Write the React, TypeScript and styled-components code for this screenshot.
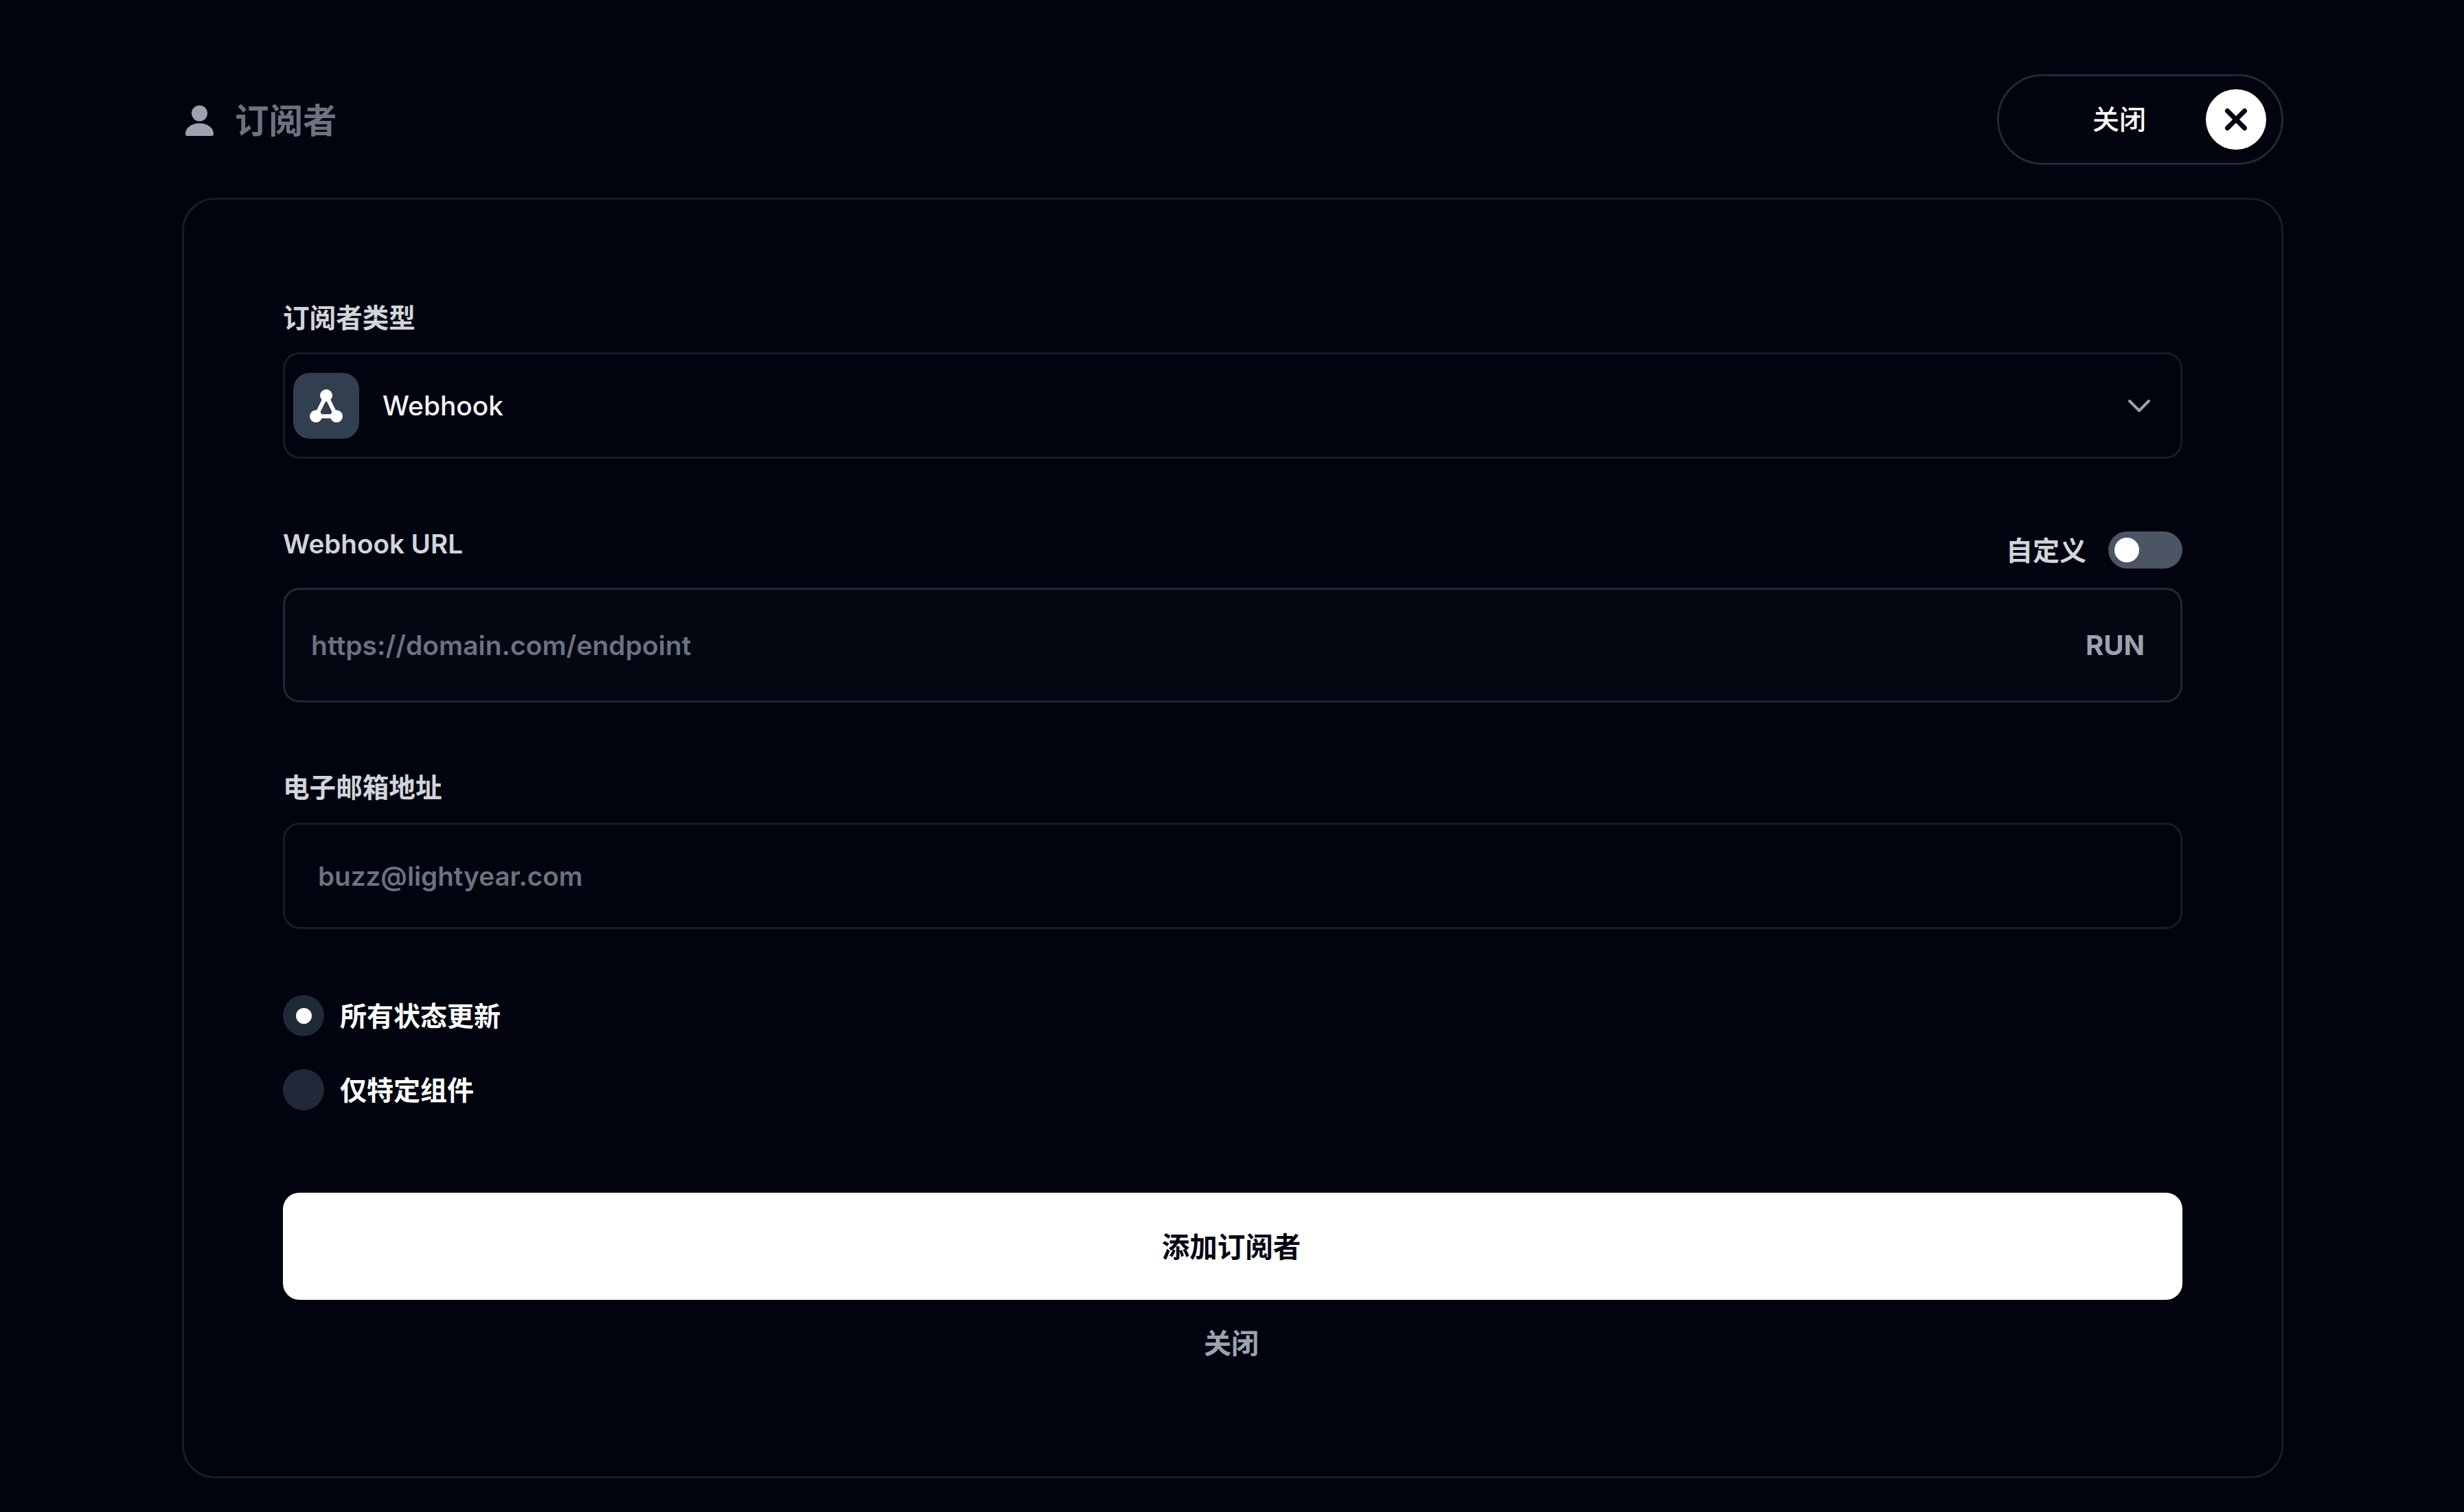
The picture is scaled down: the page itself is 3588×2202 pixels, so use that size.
import * as React from 'react';
import styled, { createGlobalStyle } from 'styled-components';

const GlobalStyle = createGlobalStyle`
    html, body {
        margin: 0;
        padding: 0;
        background: #01040f;
    }

    * {
        box-sizing: border-box;
    }

    body {
        font-family: Inter, "Noto Sans CJK SC", sans-serif;
        -webkit-font-smoothing: antialiased;
    }
`;

const PageStyled = styled.div`
    width: 3588px;
    height: 2202px;
    padding: 108px 263px 0 265px;
    overflow: hidden;
    background: #01040f;
`;

const HeaderStyled = styled.header`
    display: flex;
    justify-content: space-between;
    align-items: center;
    height: 132px;
    margin-bottom: 48px;
`;

const TitleStyled = styled.h1`
    display: flex;
    align-items: center;
    gap: 28px;
    margin: 0 0 0 1px;
    padding-top: 3px;
    font-size: 49.5px;
    line-height: 64px;
    font-weight: 600;
    color: #6b7280;
`;

const ClosePillStyled = styled.button`
    display: flex;
    align-items: center;
    gap: 87px;
    height: 132px;
    width: 417px;
    padding: 0 0 0 136px;
    border: 3px solid #1f2937;
    border-radius: 66px;
    background: transparent;
    color: #ffffff;
    font: 500 39px/56px Inter, "Noto Sans CJK SC", sans-serif;
`;

const CloseCircleStyled = styled.span`
    display: flex;
    align-items: center;
    justify-content: center;
    flex: none;
    width: 88px;
    height: 88px;
    border-radius: 50%;
    background: #ffffff;
`;

const CardStyled = styled.main`
    height: 1865px;
    padding: 144px 144px 0;
    border: 3px solid #161d2b;
    border-radius: 48px;
    background: #01040f;
`;

const LabelStyled = styled.div<{ $spaced?: boolean }>`
    margin-top: ${props => (props.$spaced ? '96px' : '0')};
    font-size: 38.6px;
    line-height: 56px;
    font-weight: 600;
    color: #d1d5db;
`;

const SelectStyled = styled.div`
    display: flex;
    align-items: center;
    height: 155px;
    margin-top: 22px;
    padding: 0 42px 0 12px;
    border: 3px solid #151c2a;
    border-radius: 24px;
`;

const SelectIconStyled = styled.span`
    display: flex;
    flex: none;
    width: 96px;
    height: 96px;
    border-radius: 24px;
    background: #323f50;
`;

const SelectTextStyled = styled.span`
    flex: 1;
    margin-left: 34px;
    font-size: 38.9px;
    font-weight: 500;
    color: #f3f4f6;
`;

const LabelRowStyled = styled.div`
    display: flex;
    justify-content: space-between;
    align-items: flex-start;
    height: 64px;
    margin-top: 96px;
`;

const CustomToggleStyled = styled.div`
    display: flex;
    align-items: center;
    gap: 32px;
    height: 54px;
    margin-top: 10px;
    font-size: 39px;
    font-weight: 600;
    color: #d1d5db;
`;

const CustomLabelStyled = styled.span`
    margin-bottom: 4px;
`;

const ToggleTrackStyled = styled.span`
    display: flex;
    align-items: center;
    width: 108px;
    height: 54px;
    padding: 0 9px;
    border-radius: 27px;
    background: #4b5563;
`;

const ToggleKnobStyled = styled.span`
    width: 36px;
    height: 36px;
    border-radius: 50%;
    background: #ffffff;
`;

const UrlBoxStyled = styled.div`
    display: flex;
    align-items: center;
    height: 167px;
    margin-top: 28px;
    padding: 0 52px 0 38px;
    border: 3px solid #1f2937;
    border-radius: 24px;
    background: #030712;
`;

const EmailBoxStyled = styled.div`
    display: flex;
    align-items: center;
    height: 155px;
    margin-top: 23px;
    padding: 0 48px;
    border: 3px solid #151c2a;
    border-radius: 24px;
`;

const InputStyled = styled.input<{ $size: number }>`
    flex: 1;
    min-width: 0;
    padding: 0;
    border: none;
    outline: none;
    background: transparent;
    font: 600 ${props => props.$size}px/56px Inter, "Noto Sans CJK SC", sans-serif;
    color: #f3f4f6;

    &::placeholder {
        color: #6b7280;
        opacity: 1;
    }
`;

const RunStyled = styled.span`
    font-size: 40px;
    font-weight: 700;
    color: #9ca3af;
`;

const RadioGroupStyled = styled.div`
    display: flex;
    flex-direction: column;
    gap: 48px;
    margin-top: 96px;
`;

const RadioRowStyled = styled.label`
    display: flex;
    align-items: center;
    gap: 23px;
    height: 60px;
    font-size: 39px;
    font-weight: 600;
    color: #ffffff;
`;

const RadioTextStyled = styled.span`
    margin-bottom: 4px;
`;

const RadioDotStyled = styled.span<{ $checked?: boolean }>`
    display: flex;
    align-items: center;
    justify-content: center;
    flex: none;
    width: 60px;
    height: 60px;
    border-radius: 50%;
    background: #1f2937;

    &::after {
        content: '';
        display: ${props => (props.$checked ? 'block' : 'none')};
        width: 23px;
        height: 23px;
        border-radius: 50%;
        background: #ffffff;
    }
`;

const SubmitStyled = styled.button`
    display: block;
    width: 100%;
    height: 156px;
    margin-top: 120px;
    padding: 3px 4px 0 0;
    border: none;
    border-radius: 24px;
    background: #ffffff;
    color: #030712;
    font: 600 40.5px/56px Inter, "Noto Sans CJK SC", sans-serif;
`;

const CancelStyled = styled.div`
    margin-top: 36px;
    padding-right: 4px;
    text-align: center;
    font-size: 40px;
    line-height: 56px;
    font-weight: 600;
    color: #9ca3af;
`;

function UserIcon() {
    return (
        <svg width="48" height="48" viewBox="0 0 48 48" fill="#9ca3af">
            <circle cx="24.5" cy="13" r="11.5" />
            <path d="M4 43c0-9 9-15.500 20.500-15.500S45 34 45 43q0 3-3 3H7q-3 0-3-3z" />
        </svg>
    );
}

function CloseIcon() {
    return (
        <svg width="48" height="48" viewBox="0 0 48 48" fill="none" stroke="#030712" strokeWidth="7" strokeLinecap="round">
            <path d="M11.500 11.500l25 25M36.500 11.500l-25 25" />
        </svg>
    );
}

function WebhookIcon() {
    return (
        <svg width="96" height="96" viewBox="0 0 96 96" fill="#ffffff" stroke="#ffffff">
            <path d="M48 33L33 63.300H63Z" fill="none" strokeWidth="6" strokeLinejoin="round" />
            <circle cx="48" cy="33" r="9" strokeWidth="0" />
            <circle cx="33" cy="63.300" r="9" strokeWidth="0" />
            <circle cx="63" cy="63.300" r="9" strokeWidth="0" />
        </svg>
    );
}

function ChevronIcon() {
    return (
        <svg width="36" height="22" viewBox="0 0 36 22" fill="none" stroke="#9ca3af" strokeWidth="4" strokeLinecap="round" strokeLinejoin="round">
            <path d="M4 4l14 14L32 4" />
        </svg>
    );
}

export default function App() {
    return (
        <PageStyled>
            <GlobalStyle />
            <HeaderStyled>
                <TitleStyled>
                    <UserIcon />
                    订阅者
                </TitleStyled>
                <ClosePillStyled>
                    关闭
                    <CloseCircleStyled>
                        <CloseIcon />
                    </CloseCircleStyled>
                </ClosePillStyled>
            </HeaderStyled>
            <CardStyled>
                <LabelStyled>订阅者类型</LabelStyled>
                <SelectStyled>
                    <SelectIconStyled>
                        <WebhookIcon />
                    </SelectIconStyled>
                    <SelectTextStyled>Webhook</SelectTextStyled>
                    <ChevronIcon />
                </SelectStyled>
                <LabelRowStyled>
                    <LabelStyled>Webhook URL</LabelStyled>
                    <CustomToggleStyled>
                        <CustomLabelStyled>自定义</CustomLabelStyled>
                        <ToggleTrackStyled>
                            <ToggleKnobStyled />
                        </ToggleTrackStyled>
                    </CustomToggleStyled>
                </LabelRowStyled>
                <UrlBoxStyled>
                    <InputStyled $size={39} placeholder="https://domain.com/endpoint" />
                    <RunStyled>RUN</RunStyled>
                </UrlBoxStyled>
                <LabelStyled $spaced>电子邮箱地址</LabelStyled>
                <EmailBoxStyled>
                    <InputStyled $size={38.6} placeholder="buzz@lightyear.com" />
                </EmailBoxStyled>
                <RadioGroupStyled>
                    <RadioRowStyled>
                        <RadioDotStyled $checked />
                        <RadioTextStyled>所有状态更新</RadioTextStyled>
                    </RadioRowStyled>
                    <RadioRowStyled>
                        <RadioDotStyled />
                        <RadioTextStyled>仅特定组件</RadioTextStyled>
                    </RadioRowStyled>
                </RadioGroupStyled>
                <SubmitStyled>添加订阅者</SubmitStyled>
                <CancelStyled>关闭</CancelStyled>
            </CardStyled>
        </PageStyled>
    );
}
